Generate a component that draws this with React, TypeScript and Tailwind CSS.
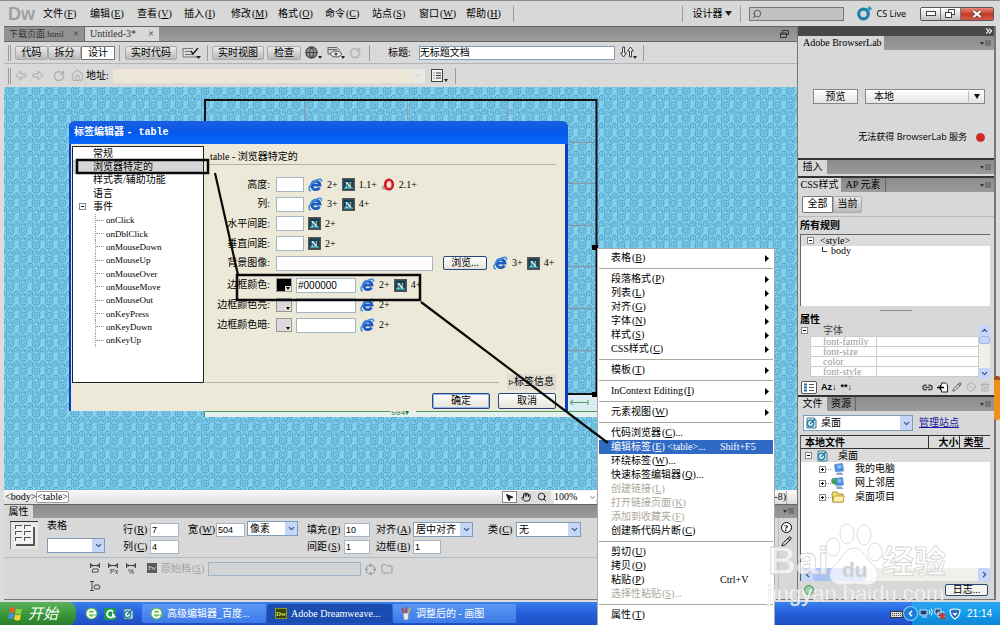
import {
  Ban,
  ChevronDown,
  ChevronLeft,
  ChevronRight,
  ChevronUp,
  ChevronsRight,
  Crosshair,
  Folder,
  Globe,
  Hand,
  House,
  Link2,
  MousePointer2,
  Pencil,
  RotateCw,
  Search,
  Trash2,
} from "lucide-react";

type KeyedProps = { text: string; k?: string; after?: string };

const Keyed = ({ text, k, after }: KeyedProps) => (
  <span className="whitespace-pre">
    {text}
    {k && (
      <span className="ml-px">
        (<u>{k}</u>){after}
      </span>
    )}
  </span>
);

const Divider = () => <div className="h-4 w-px bg-[#9a9a9a]" />;

const Grip = () => (
  <div className="h-4 w-[3px] border-x border-[#9c9c9c]" aria-hidden="true" />
);

const MENUS = [
  ["文件", "F"],
  ["编辑", "E"],
  ["查看", "V"],
  ["插入", "I"],
  ["修改", "M"],
  ["格式", "O"],
  ["命令", "C"],
  ["站点", "S"],
  ["窗口", "W"],
  ["帮助", "H"],
];

const MenuBar = () => (
  <header className="flex h-[26px] shrink-0 items-center border-t border-[#8a8a8a] bg-[#d8d8d8] pr-[6px] pl-2">
    <div className="w-[35px] font-['Liberation_Sans',sans-serif] text-[18px] font-bold text-[#a0a0a0]">
      Dw
    </div>
    <nav className="flex">
      {MENUS.map(([text, k]) => (
        <button key={k} className="w-[47px] text-left">
          <Keyed text={text} k={k} />
        </button>
      ))}
    </nav>
    <Divider />
    <div className="flex-1" />
    <Divider />
    <button className="flex w-[57px] items-center justify-between pr-2 pl-[10px]">
      设计器
      <svg width="7" height="5" className="shrink-0" aria-hidden="true">
        <path d="M0 0h7L3.500 5z" fill="#222" />
      </svg>
    </button>
    <Divider />
    <label className="ml-2 flex h-[14px] w-[95px] items-center border border-[#777] bg-[#c2c2c2] pl-[2px]">
      <Search size={10} className="-scale-x-100 text-[#444]" />
      <input aria-label="搜索" className="min-w-0 flex-1 bg-transparent outline-none" />
    </label>
    <button className="ml-3 flex items-center gap-1 font-['Open_Sans',sans-serif] text-[9px]">
      <svg width="17" height="15" viewBox="0 0 17 15" aria-hidden="true">
        <circle cx="7.500" cy="8" r="4.800" fill="none" stroke="#1f7fa8" strokeWidth="3.200" />
        <path d="M13.500 0v5M11 2.500h5" stroke="#2b94bd" strokeWidth="1.500" />
      </svg>
      CS Live
    </button>
    <div className="ml-[14px] flex h-[14px] overflow-hidden rounded-xs border border-[#555]">
      <button aria-label="最小化" className="flex w-5 items-center justify-center border-r border-[#777] bg-linear-to-b from-white to-[#c0c0c0]">
        <svg width="10" height="5" aria-hidden="true">
          <rect x=".5" y=".5" width="9" height="4" fill="#fff" stroke="#444" />
        </svg>
      </button>
      <button aria-label="还原" className="flex w-5 items-center justify-center border-r border-[#777] bg-linear-to-b from-white to-[#c0c0c0]">
        <svg width="11" height="9" aria-hidden="true">
          <rect x="3.500" y=".5" width="6" height="5" fill="#fff" stroke="#444" />
          <rect x=".5" y="3.500" width="6" height="5" fill="#fff" stroke="#444" />
        </svg>
      </button>
      <button aria-label="关闭" className="flex w-8 items-center justify-center bg-linear-to-b from-[#e8877a] via-[#c63a28] to-[#d2594a]">
        <svg width="10" height="8" viewBox="0 0 10 8" aria-hidden="true">
          <path d="M1.500 1l7 6M8.500 1l-7 6" stroke="#444" strokeWidth="3.600" />
          <path d="M1.500 1l7 6M8.500 1l-7 6" stroke="#fff" strokeWidth="2.200" />
        </svg>
      </button>
    </div>
  </header>
);

const GREY_BTN =
  "flex h-[14px] items-center justify-center rounded-xs border border-[#aaa] bg-linear-to-b from-[#ececec] to-[#b8b8b8]";

const DocumentTabs = () => (
  <div className="flex h-4 shrink-0 items-center border-y border-[#666] bg-linear-to-b from-[#8a8a8a] to-[#9c9c9c]">
    <button className="flex h-[14px] w-[81px] items-center justify-between border-r border-[#666] bg-[#929292] px-[5px] text-[#333]">
      <span className="text-[9px] whitespace-nowrap">下载页面.html</span>
      <span>×</span>
    </button>
    <button className="flex h-[14px] w-[74px] items-center justify-between bg-[#d8d8d8] px-[5px] text-[#333]">
      <span>Untitled-3*</span>
      <span>×</span>
    </button>
    <div className="flex-1" />
    <svg width="9" height="8" className="mr-2" aria-hidden="true">
      <path d="M2.500 2.500v-2h6v4h-2M.5 3h6v4.500h-6zM.5 4h6" fill="none" stroke="#333" />
    </svg>
  </div>
);

const DocumentToolbar = () => (
  <div className="flex h-[22px] shrink-0 items-center border-b border-[#b4b4b4] bg-[#d9d9d9] pl-1">
    <Grip />
    <div className="ml-1 flex">
      <button className={`${GREY_BTN} w-[33px]`}>代码</button>
      <button className={`${GREY_BTN} w-[33px]`}>拆分</button>
      <button className="flex h-[14px] w-[34px] items-center justify-center border border-[#777] bg-white">
        设计
      </button>
    </div>
    <div className="ml-1 flex items-center gap-[5px]">
      <Divider />
      <button className={`${GREY_BTN} w-[52px]`}>实时代码</button>
      <svg width="20" height="14" aria-hidden="true">
        <path d="M1 2.500h10M1 2v9h14M3 5.500h6M3 8.500h8" fill="none" stroke="#777" />
        <path d="M9 5l2 3 5-6" fill="none" stroke="#222" strokeWidth="1.500" />
        <path d="M14 10h5l-2.500 3z" fill="#222" />
      </svg>
      <Divider />
    </div>
    <div className="ml-1 flex items-center gap-[3px]">
      <button className={`${GREY_BTN} w-[52px]`}>实时视图</button>
      <button className={`${GREY_BTN} w-[34px]`}>检查</button>
    </div>
    <button aria-label="预览" className="ml-1 flex w-[22px] items-center">
      <Globe size={13} className="rounded-full bg-[#999] text-[#444]" />
      <svg width="4" height="12" aria-hidden="true">
        <path d="M0 9h4l-2 3z" fill="#222" />
      </svg>
    </button>
    <svg width="18" height="14" aria-hidden="true">
      <path d="M1 1.500h9l3 3M1 1v7h3M1 3.500h9" fill="none" stroke="#666" />
      <ellipse cx="9" cy="8" rx="5.500" ry="3" fill="#e6e6e6" stroke="#555" />
      <circle cx="9" cy="8" r="1.500" fill="#555" />
      <path d="M14 10h4l-2 3z" fill="#222" />
    </svg>
    <RotateCw size={12} strokeWidth={3} className="mr-2 ml-1 text-[#b4b4b4]" />
    <Divider />
    <label htmlFor="doc-title" className="mr-2 ml-[18px] whitespace-nowrap">
      标题:
    </label>
    <input
      id="doc-title"
      defaultValue="无标题文档"
      className="h-[14px] w-[196px] border border-[#7f9db9] bg-white outline-none"
    />
    <svg width="18" height="13" className="mx-[5px]" aria-hidden="true">
      <path d="M2.500 1h2v6h2l-3 4-3-4h2zM9.500 11h2V5h2l-3-4-3 4h2z" fill="#eee" stroke="#444" />
      <path d="M13 10h4l-2 3z" fill="#222" />
    </svg>
    <Divider />
  </div>
);

const AddressBar = () => (
  <div className="flex h-[23px] shrink-0 items-center bg-[#d9d9d9] pl-1">
    <Grip />
    <div className="ml-1 flex items-center gap-1 text-[#b0b0b0]">
      <svg width="12" height="11" aria-hidden="true">
        <path d="M1 5.500l5-4.500v3h5v3H6v3z" fill="none" stroke="#aaa" />
      </svg>
      <svg width="14" height="11" aria-hidden="true">
        <path d="M12 5.500L7 1v3H2v3h5v3z" fill="none" stroke="#aaa" />
      </svg>
      <RotateCw size={12} strokeWidth={3} className="ml-1" />
      <House size={13} className="ml-[2px]" />
    </div>
    <label htmlFor="address" className="mr-1 ml-[2px] whitespace-nowrap">
      地址:
    </label>
    <div className="flex h-[14px] w-[312px] bg-[#ece6d6]">
      <input id="address" className="min-w-0 flex-1 outline-none" />
      <span className="flex w-3 items-center justify-center bg-[#e9e9e4] text-[#bbb]">
        <ChevronDown size={9} />
      </span>
    </div>
    <svg width="20" height="14" className="mr-1 ml-[6px]" aria-hidden="true">
      <rect x=".5" y=".5" width="11" height="12" fill="#f4f4f4" stroke="#444" />
      <path d="M2.500 4h1M5 4h5M2.500 6.500h1M5 6.500h5M2.500 9h1M5 9h5" stroke="#333" />
      <path d="M13 10h4l-2 3z" fill="#222" />
    </svg>
    <Divider />
  </div>
);

const Canvas = () => (
  <svg className="block h-full w-full" aria-hidden="true">
    <defs>
      <pattern id="swirl" width="13" height="14" patternUnits="userSpaceOnUse">
        <rect width="13" height="14" fill="#85d0ec" />
        <g fill="none" stroke="#4fa3ca" strokeWidth="1">
          <path d="M6 4a1 1 0 0 1 2 0a2 2 0 0 1-4 0a3 3 0 0 1 6 0a4 4 0 0 1-8 0a5 5 0 0 1 9-3" />
          <path d="M-1 11a1 1 0 0 1 2 0a2 2 0 0 1-4 0a3 3 0 0 1 6 0a4 4 0 0 1-8 0" />
          <path d="M12 11a1 1 0 0 1 2 0a2 2 0 0 1-4 0a3 3 0 0 1 6 0a4 4 0 0 1-8 0" />
          <path d="M4 13.500q2.500-4 5 0M4.500 11q2-3 4 0" />
        </g>
      </pattern>
    </defs>
    <rect width="100%" height="100%" fill="url(#swirl)" />
    <rect x="200" y="324" width="393" height="6" fill="#e4f1ee" />
    <rect x="560" y="308" width="33" height="18" fill="#d8ecf2" />
    <path d="M300.500 13v25M403.500 13v25M503.500 13v25" stroke="#8aa0aa" />
    <path d="M560 55.500h32M560 96.500h32M560 138.500h32M560 179.500h32M560 221.500h32M560 263.500h32" stroke="#8a98a2" />
    <path d="M201 320V13h391.500v294H560" fill="none" stroke="#111" strokeWidth="2" />
    <path d="M200.500 330v-5.500h186M412 324.500h181M567 315.500h17M569 313l-3 2.500 3 2.500M584 313v5" fill="none" stroke="#4f9a5c" />
    <text x="387" y="328" fontSize="8" fill="#2e7a3c" fontFamily="Liberation Mono">504▾</text>
    <path d="M588 158h6v5h-6zM588 305h6v5h-6z" fill="#000" />
  </svg>
);

const IeIcon = () => (
  <svg width="15" height="14" viewBox="0 0 15 14" aria-hidden="true">
    <path d="M11.500 9.500A4.200 4.200 0 1 1 12 7.200H4.500" fill="none" stroke="#1c5cc0" strokeWidth="2.800" />
    <path d="M4.200 5.500A4.200 4.200 0 0 1 8.500 3" fill="none" stroke="#6fb0f4" />
    <path d="M3 12.800C-1 13 1.500 6 7 3c4-2.400 7-2.500 6.500.8" fill="none" stroke="#3d8ae0" strokeWidth="1.500" />
  </svg>
);

const NetscapeIcon = () => (
  <svg width="13" height="13" aria-hidden="true">
    <rect x=".75" y=".75" width="11.500" height="11.500" fill="#123f52" stroke="#555" strokeWidth="1.500" />
    <path d="M2 9.500q4.500-3 9 0V11H2z" fill="#3d98a6" />
    <text x="3" y="10" fontSize="9" fontWeight="bold" fontFamily="Liberation Serif" fill="#dff3fa">N</text>
  </svg>
);

const OperaIcon = () => (
  <svg width="14" height="13" aria-hidden="true">
    <ellipse cx="4" cy="9.500" rx="3.500" ry="2.500" fill="#b9a7a2" />
    <ellipse cx="8" cy="6.500" rx="3.800" ry="4.800" fill="#f3dcd5" stroke="#cf1c22" strokeWidth="2.600" />
  </svg>
);

const Support = ({ kind, version }: { kind: string; version: string }) => (
  <span className="flex items-center gap-1">
    {kind === "ie" && <IeIcon />}
    {kind === "ns" && <NetscapeIcon />}
    {kind === "op" && <OperaIcon />}
    {version}
  </span>
);

const EVENTS = [
  "onClick",
  "onDblClick",
  "onMouseDown",
  "onMouseUp",
  "onMouseOver",
  "onMouseMove",
  "onMouseOut",
  "onKeyPress",
  "onKeyDown",
  "onKeyUp",
];

const SIZE_ROWS = [
  { id: "height", label: "高度", support: [["ie", "2+"], ["ns", "1.1+"], ["op", "2.1+"]] },
  { id: "cols", label: "列", support: [["ie", "3+"], ["ns", "4+"]] },
  { id: "hspace", label: "水平间距", support: [["ns", "2+"]] },
  { id: "vspace", label: "垂直间距", support: [["ns", "2+"]] },
];

const COLOR_ROWS = [
  { id: "bordercolor", label: "边框颜色", swatch: "bg-black", value: "#000000", support: [["ie", "2+"], ["ns", "4+"]] },
  { id: "borderlight", label: "边框颜色亮", swatch: "bg-[#dcd9de]", value: "", support: [["ie", "2+"]] },
  { id: "borderdark", label: "边框颜色暗", swatch: "bg-[#dcd9de]", value: "", support: [["ie", "2+"]] },
];

const FieldLabel = ({ id, text }: { id: string; text: string }) => (
  <label htmlFor={id} className="w-[61px] shrink-0 text-right whitespace-nowrap">
    {text}:
  </label>
);

const XP_INPUT = "h-[15px] border border-[#a5b5c5] bg-white px-px outline-none";
const XP_BTN =
  "flex items-center justify-center rounded-xs border border-[#27487c] bg-linear-to-b from-white to-[#e6e3d8]";

const Expander = ({ open }: { open?: boolean }) => (
  <svg width="7" height="7" className="shrink-0" aria-hidden="true">
    <rect x=".5" y=".5" width="6" height="6" fill="#fff" stroke="#888" />
    <path d={open ? "M2 3.500h3" : "M2 3.500h3M3.500 2v3"} stroke="#000" />
  </svg>
);

const TagEditor = () => (
  <section className="absolute top-[34px] left-[65px] flex h-[290px] w-[499px] flex-col rounded-t-md border-r-[3px] border-l-2 border-[#0a3cc4] bg-[#ece9d8]">
    <h1 className="-mr-[3px] -ml-0.5 flex h-[23px] shrink-0 items-center rounded-t-md bg-linear-to-b from-[#1a5fe0] via-[#0458ea] to-[#0a66fb] px-[5px] font-bold text-white">
      <span>
        标签编辑器{" "}
        <span className="font-['Liberation_Mono',monospace]">- table</span>
      </span>
    </h1>
    <div className="flex flex-1">
      <div className="m-px mt-[2px] flex h-[237px] w-[132px] shrink-0 flex-col border border-[#222] bg-white">
        <ul className="flex h-[200px] flex-col leading-3">
          <li className="flex flex-1 items-center pl-5">常规</li>
          <li className="flex flex-1 items-center bg-[#d6d6d6] pl-5">浏览器特定的</li>
          <li className="flex flex-1 items-center pl-5">样式表/辅助功能</li>
          <li className="flex flex-1 items-center pl-5">语言</li>
          <li className="flex flex-1 items-center pl-[6px]">
            <Expander open />
            <span className="ml-[7px]">事件</span>
          </li>
          {EVENTS.map((name) => (
            <li key={name} className="ml-[22px] flex flex-1 items-center border-l border-dotted border-[#999] text-[9px]">
              <span className="mr-[2px] w-2 border-t border-dotted border-[#999]" />
              {name}
            </li>
          ))}
        </ul>
      </div>
      <div className="flex min-w-0 flex-1 flex-col pr-[9px] pl-1">
        <h2 className="mt-[5px] flex h-4 items-center border-b border-[#b5b2a4] pl-px">
          table - 浏览器特定的
        </h2>
        <div className="mt-[10px] flex h-[98px] flex-col">
          {SIZE_ROWS.map((row) => (
            <div key={row.id} className="flex flex-1 items-center">
              <FieldLabel id={row.id} text={row.label} />
              <input id={row.id} className={`${XP_INPUT} mr-1 ml-[6px] w-7`} />
              <span className="flex gap-1">
                {row.support.map(([kind, version]) => (
                  <Support key={kind} kind={kind} version={version} />
                ))}
              </span>
            </div>
          ))}
          <div className="flex flex-1 items-center">
            <FieldLabel id="background" text="背景图像" />
            <input id="background" className={`${XP_INPUT} ml-[6px] w-[157px]`} />
            <button className={`${XP_BTN} mr-[6px] ml-[10px] h-[14px] w-11`}>浏览...</button>
            <span className="flex gap-1">
              <Support kind="ie" version="3+" />
              <Support kind="ns" version="4+" />
            </span>
          </div>
        </div>
        <div className="mt-[2px] flex h-[60px] flex-col">
          {COLOR_ROWS.map((row) => (
            <div key={row.id} className="flex flex-1 items-center">
              <FieldLabel id={row.id} text={row.label} />
              <button
                aria-label={row.label}
                className={`${row.swatch} mr-1 ml-[6px] flex h-[14px] w-4 items-end justify-end border border-[#999]`}
              >
                <svg width="6" height="5" className="bg-[#e6e3dc]" aria-hidden="true">
                  <path d="M1 1h4L3 4z" fill="#000" />
                </svg>
              </button>
              <input
                id={row.id}
                defaultValue={row.value}
                className={`${XP_INPUT} mr-1 w-[60px] font-['Liberation_Sans',sans-serif]`}
              />
              <span className="flex gap-1">
                {row.support.map(([kind, version]) => (
                  <Support key={kind} kind={kind} version={version} />
                ))}
              </span>
            </div>
          ))}
        </div>
        <div className="mt-[38px] flex h-[18px] items-center">
          <div className="-ml-1 h-px flex-1 bg-[#b5b2a4]" />
          <button className="ml-2 h-4 bg-[#dedbd2] px-[2px] whitespace-nowrap">▹标签信息</button>
        </div>
        <div className="mt-[2px] flex justify-end gap-2">
          <button className={`${XP_BTN} h-4 w-[58px] ring-1 ring-[#8fb4ee] ring-inset`}>确定</button>
          <button className={`${XP_BTN} h-4 w-[58px]`}>取消</button>
        </div>
      </div>
    </div>
  </section>
);

const StatusBar = () => (
  <div className="flex h-[14px] shrink-0 items-center bg-linear-to-b from-[#fafafa] to-[#dedede] pl-px">
    &lt;body&gt;
    <span className="flex h-3 items-center rounded-xs border border-[#999] bg-white">
      &lt;table&gt;
    </span>
    <div className="flex-1" />
    <button aria-label="选取" className="flex h-3 w-[15px] items-center justify-center border border-[#888] bg-white">
      <MousePointer2 size={9} fill="#222" />
    </button>
    <div className="flex h-3 items-center gap-[6px] bg-[#dcdcdc] px-1">
      <Hand size={10} />
      <Search size={10} />
    </div>
    <div className="mx-[3px] flex h-[13px] w-[42px] items-center bg-white">
      <span className="flex-1">100%</span>
      <ChevronDown size={7} />
    </div>
    <div className="flex h-[13px] w-[188px] items-center justify-end border-r border-[#aaa]">
      -8)
    </div>
    <div className="w-[10px]" />
  </div>
);

type SelectProps = { label: string; value: string; className: string };

const XpSelect = ({ label, value, className }: SelectProps) => (
  <span className={`${className} flex h-[15px] border border-[#7f9db9] bg-white`}>
    <select aria-label={label} className="min-w-0 flex-1 appearance-none pl-[2px] outline-none">
      <option>{value}</option>
    </select>
    <span className="pointer-events-none flex w-3 items-center justify-center bg-[#c6d6f8] text-[#2f4f8c]">
      <ChevronDown size={9} strokeWidth={3} />
    </span>
  </span>
);

type NumProps = { id: string; text: string; k: string; value: string; label: string; input: string };

const NumField = ({ id, text, k, value, label, input }: NumProps) => (
  <div className="flex h-[17px] items-center">
    <label htmlFor={id} className={label}>
      <Keyed text={text} k={k} />
    </label>
    <input
      id={id}
      defaultValue={value}
      className={`${input} h-[14px] border border-[#a5b5c5] bg-white px-px font-['Liberation_Sans',sans-serif] text-[9px] outline-none`}
    />
  </div>
);

const PanelMenuIcon = () => (
  <svg width="11" height="7" className="mr-[3px] ml-auto" aria-hidden="true">
    <path d="M0 2h4l-2 3z" fill="#333" />
    <path d="M5 1h6M5 3h6M5 5h6" stroke="#555" />
  </svg>
);

const PANEL_BAR =
  "flex h-[14px] shrink-0 items-center bg-linear-to-b from-[#8c8c8c] to-[#9a9a9a]";

const Properties = () => (
  <section className="flex h-24 shrink-0 flex-col border-b border-[#777] bg-[#d8d8d8]">
    <div className={`${PANEL_BAR} border-t border-[#666]`}>
      <h2 className="flex h-full w-[29px] items-center justify-center bg-[#d8d8d8]">属性</h2>
      <PanelMenuIcon />
    </div>
    <div className="flex flex-1">
      <div className="flex min-w-0 flex-1 flex-col">
        <div className="flex h-10 border-b border-[#b2bcc6] pt-[3px] pl-[6px]">
          <svg width="28" height="28" aria-hidden="true">
            <path d="M0 28V.5h28" fill="none" stroke="#333" />
            <rect x="1" y="1" width="27" height="27" fill="#e6e6e6" />
            <rect x="6" y="6" width="19" height="19" fill="#555" />
            <rect x="4" y="4" width="19" height="19" fill="#f4f4f4" />
            <path d="M5 4.500h7M14 4.500h7M5 10.500h7M14 10.500h7M5 16.500h7M14 16.500h7M5.500 5v3M14.500 5v3M5.500 11v3M14.500 11v3M5.500 17v3M14.500 17v3" stroke="#555" />
          </svg>
          <div className="mr-[18px] ml-[9px] flex flex-col gap-1">
            <span className="h-[13px] leading-[10px]">表格</span>
            <XpSelect label="表格" value="" className="w-[58px]" />
          </div>
          <div className="mr-[9px]">
            <NumField id="rows" text="行" k="R" value="7" label="w-[27px]" input="w-[29px]" />
            <NumField id="columns" text="列" k="C" value="4" label="w-[27px]" input="w-[29px]" />
          </div>
          <NumField id="width" text="宽" k="W" value="504" label="w-7" input="w-[29px]" />
          <XpSelect label="单位" value="像素" className="mr-[9px] ml-[2px] w-[51px]" />
          <div className="mr-[6px]">
            <NumField id="padding" text="填充" k="P" value="10" label="w-[37px]" input="w-[26px]" />
            <NumField id="spacing" text="间距" k="S" value="1" label="w-[37px]" input="w-[26px]" />
          </div>
          <div>
            <div className="flex h-[17px] items-center">
              <span className="w-[37px]">
                <Keyed text="对齐" k="A" />
              </span>
              <XpSelect label="对齐" value="居中对齐" className="w-[60px]" />
            </div>
            <NumField id="border" text="边框" k="B" value="1" label="w-[37px]" input="w-[28px]" />
          </div>
          <div className="ml-[15px] flex h-[17px] items-center">
            <span className="w-7">
              <Keyed text="类" k="C" />
            </span>
            <XpSelect label="类" value="无" className="w-[65px]" />
          </div>
        </div>
        <div className="mt-1 flex items-start pl-[85px]">
          <div className="flex w-[58px] flex-wrap gap-[6px]">
            {["", "Px", "%", "I"].map((unit) => (
              <svg key={unit} width="12" height="12" aria-hidden="true">
                {unit === "I" ? (
                  <path d="M1 1.500h4M3 1.500v9M1 10.500h4M6 5h4l1 2-1 2H6L5 7z" fill="none" stroke="#444" />
                ) : (
                  <path d="M1.500 1v5M10.500 1v5M1 3.500h10M3 2v3M9 2v3" stroke="#444" />
                )}
                {unit === "" && <path d="M4 7h5v3H3z" fill="#eee" stroke="#444" />}
                {(unit === "Px" || unit === "%") && (
                  <text x="3" y="12" fontSize="7" fill="#333" fontFamily="Liberation Sans">{unit}</text>
                )}
              </svg>
            ))}
          </div>
          <span className="mt-px flex h-[10px] w-[10px] items-center justify-center bg-[#5a5a5a] text-[6px] text-[#ddd]">
            Fw
          </span>
          <label htmlFor="source" className="ml-1 w-[47px] text-[#a2a2a2]">
            <Keyed text="原始档" k="S" />
          </label>
          <input id="source" disabled className="h-[14px] w-[153px] border border-[#9fb2c6] bg-[#d2d4d6]" />
          <Crosshair size={11} className="mt-[2px] ml-1 text-[#888]" />
          <Folder size={12} className="mt-px ml-[5px] text-[#999]" />
        </div>
      </div>
      <div className="flex w-[19px] flex-col items-center gap-[3px] border-l border-[#bbb] pt-1 pr-1">
        <span className="flex h-[11px] w-[11px] items-center justify-center rounded-full border border-black bg-white text-[9px] font-bold">
          ?
        </span>
        <Pencil size={11} />
      </div>
    </div>
  </section>
);

const BrowserLabPanel = () => (
  <section className="flex h-[122px] shrink-0 flex-col">
    <div className={PANEL_BAR}>
      <h2 className="flex h-full w-[86px] items-center bg-[#d8d8d8] pl-[5px] whitespace-nowrap">
        Adobe BrowserLab
      </h2>
      <PanelMenuIcon />
    </div>
    <div className="mt-[39px] flex gap-[7px] pr-[9px] pl-[15px]">
      <button className="h-[15px] w-[45px] border border-[#888] bg-linear-to-b from-white to-[#e4e4e4] leading-3">
        预览
      </button>
      <span className="flex h-[15px] flex-1 items-center border border-[#888] bg-linear-to-b from-white to-[#e4e4e4]">
        <select aria-label="环境" className="min-w-0 flex-1 appearance-none pl-2 leading-3 outline-none">
          <option>本地</option>
        </select>
        <span className="pointer-events-none flex h-[11px] w-4 items-center justify-center border-l border-[#bbb]">
          <svg width="6" height="5" aria-hidden="true">
            <path d="M0 0h6L3 5z" fill="#111" />
          </svg>
        </span>
      </span>
    </div>
    <div className="mt-[26px] flex items-center justify-end gap-[9px] pr-[9px]">
      <span className="text-[9px]">
        无法获得 <span className="font-['Open_Sans',sans-serif]">BrowserLab</span> 服务
      </span>
      <span className="h-[9px] w-[9px] rounded-full border border-[#b33] bg-[#dd2424]" />
    </div>
  </section>
);

const CssPanel = () => (
  <section className="flex h-[237px] shrink-0 flex-col">
    <div className="border-t-2 border-[#333]">
      <div className={PANEL_BAR}>
        <h2 className="flex h-full w-[29px] items-center justify-center bg-[#d8d8d8]">插入</h2>
        <PanelMenuIcon />
      </div>
    </div>
    <div className="mt-[2px] border-t-2 border-[#333]">
      <div className={PANEL_BAR}>
        <button className="flex h-full w-[43px] items-center justify-center bg-[#d8d8d8] whitespace-nowrap">
          CSS样式
        </button>
        <button className="flex h-full w-[45px] items-center justify-center border-r border-[#666] whitespace-nowrap">
          AP 元素
        </button>
        <PanelMenuIcon />
      </div>
    </div>
    <div className="flex h-[25px] shrink-0 items-center border-b border-[#bbb] pl-1">
      <button className="h-[17px] w-[31px] rounded-l-xs border border-[#777] bg-white">全部</button>
      <button className="h-[17px] w-[29px] rounded-r-xs border border-[#aaa] bg-linear-to-b from-[#e8e8e8] to-[#bbb]">当前</button>
    </div>
    <h3 className="flex h-[17px] shrink-0 items-center pl-[2px] font-bold">所有规则</h3>
    <div className="mr-1 ml-[2px] h-[72px] shrink-0 border-t border-l border-[#666] bg-white">
      <div className="flex h-[11px] items-center gap-[6px] bg-[#dcdcdc] pl-[6px]">
        <Expander open />
        &lt;style&gt;
      </div>
      <div className="flex h-[10px] items-center gap-1 pl-[21px]">
        <svg width="5" height="8" aria-hidden="true">
          <path d="M.5 0v4.500H5" fill="none" stroke="#333" />
        </svg>
        body
      </div>
    </div>
    <div className="mx-auto mt-1 w-8 border-t border-[#888]" />
    <h3 className="mt-[3px] flex h-[11px] shrink-0 items-center pl-[2px] font-bold">属性</h3>
    <div className="mr-1 flex min-h-0 flex-1">
      <div className="flex min-w-0 flex-1 flex-col">
        <div className="flex h-[11px] items-center gap-[15px] pl-[3px] text-[#444]">
          <Expander open />
          字体
        </div>
        <table className="ml-3 table-fixed border-collapse bg-white text-[#9a9a9a]">
          <tbody>
            {["font-family", "font-size", "color", "font-style"].map((name) => (
              <tr key={name} className="h-[10px] border border-[#ccc] leading-[9px]">
                <td className="w-[66px] border-r border-[#ccc] py-0 pl-3">{name}</td>
                <td />
              </tr>
            ))}
          </tbody>
        </table>
      </div>
      <div className="flex w-[11px] flex-col justify-between bg-[#f0f0ec] text-[#2f4f8c]">
        <span className="flex h-[11px] items-center justify-center bg-[#c6d6f8]">
          <ChevronUp size={9} strokeWidth={3} />
        </span>
        <span className="mb-auto h-2 rounded-xs border border-[#9ab8e8] bg-[#c6d6f8]" />
        <span className="flex h-[11px] items-center justify-center bg-[#c6d6f8]">
          <ChevronDown size={9} strokeWidth={3} />
        </span>
      </div>
    </div>
    <div className="flex h-4 shrink-0 items-center gap-1 pr-1 pl-[3px]">
      <button aria-label="分类视图" className="flex h-[13px] w-4 items-center justify-center rounded-xs border border-[#555] bg-white">
        <svg width="12" height="9" aria-hidden="true">
          <path d="M1 1.500h3M1 4.500h3M1 7.500h3" stroke="#2b5fa8" strokeWidth="2" />
          <path d="M6 1.500h5M6 4.500h5M6 7.500h5" stroke="#555" />
        </svg>
      </button>
      <button className="font-['Liberation_Sans',sans-serif] text-[9px] font-bold">Az↓</button>
      <button className="font-['Liberation_Sans',sans-serif] text-[9px] font-bold">**↓</button>
      <div className="ml-auto flex items-center gap-1">
        <Link2 size={11} strokeWidth={3} className="text-[#444]" />
        <svg width="11" height="11" aria-hidden="true">
          <path d="M4.500 3V1h4l2 2v7h-6V8" fill="#fff" stroke="#222" />
          <path d="M0 5.500h7M3.500 3v5" stroke="#000" strokeWidth="1.500" />
        </svg>
        <Pencil size={10} className="text-[#444]" />
        <Ban size={10} className="text-[#aaa]" />
        <Trash2 size={10} className="text-[#aaa]" />
      </div>
    </div>
  </section>
);

const SiteIcon = () => (
  <svg width="12" height="12" aria-hidden="true">
    <path d="M2 1h7l2 2v8H2z" fill="#cfe9f2" stroke="#48788c" />
    <circle cx="5.500" cy="6.500" r="3.200" fill="#e6f6fb" stroke="#2d86a6" strokeWidth="1.500" />
    <path d="M5 7l5-5" stroke="#24708e" strokeWidth="1.200" />
  </svg>
);

const PcIcon = ({ globe }: { globe?: boolean }) => (
  <svg width="14" height="13" viewBox="0 0 14 13" aria-hidden="true">
    <path d="M3.500 1.500l8-1 1 7.500-8 .5z" fill="#3f8cf0" stroke="#7c9cc8" />
    <path d="M6 2.500l4-.5.500 3-4 1z" fill="#8cc4fa" />
    <path d="M5.500 9.500h5l2 2.500h-7z" fill="#8fa5bd" />
    {globe && <circle cx="3.500" cy="4" r="3.200" fill="#3f9f4e" />}
    {globe && <path d="M1.500 3q2-2 3 0t1.500 2" fill="none" stroke="#5aa6ee" />}
  </svg>
);

const FolderIcon = () => (
  <svg width="14" height="12" aria-hidden="true">
    <path d="M1 3l1-2h4l1 2h5v8H2z" fill="#f6e27c" stroke="#a58a2c" />
    <path d="M3 5h10l-1 6H2z" fill="#fdf2a4" stroke="#a58a2c" strokeWidth=".7" />
  </svg>
);

const FILES = [
  { name: "我的电脑", icon: <PcIcon /> },
  { name: "网上邻居", icon: <PcIcon globe /> },
  { name: "桌面项目", icon: <FolderIcon /> },
];

const FilesPanel = () => (
  <section className="flex min-h-0 flex-1 flex-col border-t-2 border-[#333]">
    <div className={PANEL_BAR}>
      <button className="flex h-full w-[29px] items-center justify-center bg-[#d8d8d8]">文件</button>
      <button className="flex h-full w-[29px] items-center justify-center border-r border-[#666]">资源</button>
      <PanelMenuIcon />
    </div>
    <div className="flex items-center py-1 pl-[5px]">
      <span className="flex h-4 w-[110px] items-center border border-[#7f9db9] bg-white pl-px">
        <SiteIcon />
        <select aria-label="站点" className="min-w-0 flex-1 appearance-none pl-1 outline-none">
          <option>桌面</option>
        </select>
        <span className="pointer-events-none flex h-full w-3 items-center justify-center bg-[#c6d6f8] text-[#2f4f8c]">
          <ChevronDown size={9} strokeWidth={3} />
        </span>
      </span>
      <a href="#sites" className="ml-[6px] text-[#1a1aa0] underline">
        管理站点
      </a>
    </div>
    <div className="mr-1 ml-[2px] flex min-h-0 flex-1 flex-col border-l border-[#555] bg-white">
      <table className="w-full table-fixed border-collapse">
        <thead>
          <tr className="h-[13px] border-y border-[#333] bg-[#dcdcdc] text-left leading-[11px]">
            <th className="py-0 pl-1">本地文件</th>
            <th className="w-[31px] border-x border-[#333] py-0 text-right">大小</th>
            <th className="w-[31px] py-0 pl-1">类型</th>
          </tr>
        </thead>
        <tbody>
          <tr className="h-[13px] bg-[#dcdcdc] leading-[13px]">
            <td colSpan={3} className="p-0">
              <div className="flex items-center pl-1">
                <Expander open />
                <span className="mr-[10px] ml-1">
                  <SiteIcon />
                </span>
                桌面
              </div>
            </td>
          </tr>
          {FILES.map((file) => (
            <tr key={file.name} className="h-[14px]">
              <td colSpan={3} className="p-0">
                <div className="flex items-center pl-[18px]">
                  <Expander />
                  <span className="w-[5px] border-t border-dotted border-[#999]" />
                  <span className="mr-[10px]">{file.icon}</span>
                  {file.name}
                </div>
              </td>
            </tr>
          ))}
        </tbody>
      </table>
      <div className="mt-auto flex h-[13px] justify-between bg-[#f1f0ea] text-[#2f4f8c]">
        <span className="flex w-3 items-center justify-center bg-[#c6d6f8]">
          <ChevronLeft size={9} strokeWidth={3} />
        </span>
        <span className="mr-auto w-[53px] rounded-xs bg-[#a9c3f4]" />
        <span className="flex w-3 items-center justify-center bg-[#c6d6f8]">
          <ChevronRight size={9} strokeWidth={3} />
        </span>
      </div>
    </div>
    <div className="flex h-[18px] shrink-0 items-center justify-between px-[6px]">
      <span className="h-[10px] w-[10px] rounded-full border border-[#3b8a4b] bg-[#9fd0a8]" />
      <button className="h-3 w-[43px] rounded-xs border border-[#27487c] bg-[#f4f3ee] leading-[10px]">
        日志...
      </button>
    </div>
  </section>
);

type Item = { text: string; k: string; after?: string; sub?: boolean; off?: boolean; on?: boolean; keys?: string };

const CONTEXT_GROUPS: Item[][] = [
  [{ text: "表格", k: "B", sub: true }],
  [
    { text: "段落格式", k: "P", sub: true },
    { text: "列表", k: "L", sub: true },
    { text: "对齐", k: "G", sub: true },
    { text: "字体", k: "N", sub: true },
    { text: "样式", k: "S", sub: true },
    { text: "CSS样式", k: "C", sub: true },
  ],
  [{ text: "模板", k: "T", sub: true }],
  [{ text: "InContext Editing", k: "I", sub: true }],
  [{ text: "元素视图", k: "W", sub: true }],
  [
    { text: "代码浏览器", k: "C", after: "..." },
    { text: "编辑标签", k: "E", after: " <table>...", on: true, keys: "Shift+F5" },
    { text: "环绕标签", k: "W", after: "..." },
    { text: "快速标签编辑器", k: "Q", after: "..." },
    { text: "创建链接", k: "L", off: true },
    { text: "打开链接页面", k: "K", off: true },
    { text: "添加到收藏夹", k: "F", off: true },
    { text: "创建新代码片断", k: "C" },
  ],
  [
    { text: "剪切", k: "U" },
    { text: "拷贝", k: "O" },
    { text: "粘贴", k: "P", keys: "Ctrl+V" },
    { text: "选择性粘贴", k: "S", after: "...", off: true },
  ],
  [{ text: "属性", k: "T" }],
];

const ContextMenu = () => (
  <div className="absolute top-[248px] left-[597px] flex w-[178px] flex-col border border-[#aaa] bg-white p-px pt-[2px] pb-1">
    {CONTEXT_GROUPS.map((group, i) => (
      <div key={i} className={i > 0 ? "mt-[3px] border-t border-[#aca899] pt-[3px]" : ""}>
        {group.map((item) => (
          <button
            key={item.text}
            disabled={item.off}
            className={`flex h-[14px] w-full items-center pr-1 pl-3 ${item.on ? "bg-[#316ac5] text-white" : item.off ? "text-[#aca899]" : "text-black"}`}
          >
            <Keyed text={item.text} k={item.k} after={item.after} />
            <span className="ml-auto flex">
              {item.keys && <span className="w-[49px] text-left">{item.keys}</span>}
              {item.sub && (
                <svg width="4" height="7" aria-hidden="true">
                  <path d="M0 0v7l4-3.500z" fill="#000" />
                </svg>
              )}
            </span>
          </button>
        ))}
      </div>
    ))}
  </div>
);

const Annotations = () => (
  <svg className="pointer-events-none absolute inset-0 h-full w-full" aria-hidden="true">
    <g fill="none" stroke="#0a0a0a">
      <rect x="77" y="160" width="131" height="13" strokeWidth="2.500" />
      <rect x="237" y="275" width="183" height="25" strokeWidth="2.500" />
      <path d="M215 173l23 102M421 302l187 141" strokeWidth="2.200" />
    </g>
  </svg>
);

const Watermark = () => (
  <svg className="pointer-events-none absolute right-[50px] bottom-[15px]" width="185" height="96" aria-hidden="true">
    <g fill="#fff" fillOpacity=".7" stroke="#d4d4d4" strokeWidth=".8">
      <text x="3" y="60" fontSize="39" fontWeight="bold" fontFamily="Liberation Sans">Bai</text>
      <ellipse cx="68" cy="33" rx="7" ry="9" />
      <ellipse cx="82" cy="20" rx="7" ry="10" />
      <ellipse cx="99" cy="21" rx="7" ry="10" />
      <ellipse cx="110" cy="38" rx="7" ry="9" />
      <path d="M89 34c10 0 12 12 20 18 9 9 3 20-9 19-7-1-15-1-22 0-11 1-18-10-9-19 8-6 9-18 20-18z" />
      <text x="117" y="59" fontSize="32" fontWeight="bold" fontFamily="Noto Sans CJK SC">经验</text>
    </g>
    <text x="77" y="63" fontSize="21" fontWeight="bold" fill="#d0d0d0" fontFamily="Liberation Sans">du</text>
    <text x="2" y="87" fontSize="22" fill="#fff" fillOpacity=".85" stroke="#d4d4d4" strokeWidth=".4" fontFamily="Liberation Sans">
      jingyan.baidu.com
    </text>
  </svg>
);

const GreenE = () => (
  <svg width="13" height="13" viewBox="0 0 13 13" aria-hidden="true">
    <circle cx="6.500" cy="6.500" r="6" fill="#5fbf4a" />
    <path d="M10 8.500A4 4 0 1 1 10.500 6.500H3" fill="none" stroke="#fff" strokeWidth="1.800" />
  </svg>
);

const Taskbar = () => (
  <footer className="flex h-[23px] shrink-0 items-center bg-linear-to-b from-[#3a80ee] via-[#245edb] to-[#1f4fc4] text-white">
    <button className="flex h-full w-[76px] items-center gap-[5px] rounded-r-lg bg-linear-to-b from-[#5cb25c] via-[#3a9a3a] to-[#2d7d2d] pl-2 text-[15px] italic">
      <svg width="15" height="15" viewBox="0 0 15 15" aria-hidden="true">
        <path d="M2 2q3-1.500 5 0L6 7Q4 5.500 1 7z" fill="#ee5a2e" />
        <path d="M8 2.500q3 1.500 6 0L13 8Q10 9 7 7.500z" fill="#8bd13c" />
        <path d="M1 8q3-1.500 5 0L5 13Q3 11.500 0 13z" fill="#4a8cf0" />
        <path d="M7 8.500q3 1.500 6 0L12 14Q9 15 6 13.500z" fill="#fbd12e" />
      </svg>
      开始
    </button>
    <div className="flex w-[66px] items-center gap-[6px] pl-[9px]">
      <GreenE />
      <svg width="12" height="12" aria-hidden="true">
        <rect width="12" height="12" rx="2" fill="#1c9a4c" />
        <path d="M9 3.500a3.500 3.500 0 1 0 0 5V6.500l2 3" fill="none" stroke="#fff" strokeWidth="1.800" />
      </svg>
      <SiteIcon />
    </div>
    <button className="flex h-[19px] w-[124px] items-center gap-1 rounded-xs bg-linear-to-b from-[#5a97f5] to-[#3c7ae8] pl-2">
      <GreenE />
      <span>高级编辑器_百度...</span>
    </button>
    <button className="ml-px flex h-[19px] w-[125px] items-center gap-1 rounded-xs bg-[#1b4cb0] pl-2">
      <span className="flex h-[11px] w-3 items-center justify-center border border-[#8a9a20] bg-[#39420c] text-[7px] font-bold text-[#d3e04a]">
        Dw
      </span>
      <span>Adobe Dreamweave...</span>
    </button>
    <button className="ml-px flex h-[19px] w-[123px] items-center gap-1 rounded-xs bg-linear-to-b from-[#5a97f5] to-[#3c7ae8] pl-[7px]">
      <svg width="12" height="13" aria-hidden="true">
        <path d="M3 6h6l-1 7H4z" fill="#e6edf5" stroke="#777" strokeWidth=".6" />
        <path d="M4 6L2 1M6 6V0" stroke="#d33a2a" strokeWidth="1.500" />
        <path d="M8 6l2-5" stroke="#e8b23a" strokeWidth="1.500" />
      </svg>
      <span>调整后的 - 画图</span>
    </button>
    <div className="flex-1" />
    <svg width="13" height="10" className="mr-[9px]" aria-hidden="true">
      <rect x=".5" y="2.500" width="12" height="6" fill="#ddd" stroke="#333" />
      <path d="M2 4.500h9M2 6.500h9" stroke="#444" strokeDasharray="1 1" />
    </svg>
    <div className="flex h-full w-[88px] items-center gap-[2px] bg-linear-to-b from-[#2ba6f2] via-[#129be9] to-[#0f86d6]">
      <span className="-ml-2 flex h-[13px] w-[13px] shrink-0 items-center justify-center rounded-full bg-[#1b7fd8] ring-1 ring-[#8fd0fa]">
        <ChevronLeft size={9} strokeWidth={4} />
      </span>
      <svg width="28" height="13" className="shrink-0" aria-hidden="true">
        <path d="M1 3h7v5H1zM3 10h5" fill="#24406e" stroke="#cfe4fa" />
        <path d="M10 3q2 2 0 4M12 1.500q3 3 0 7" fill="none" stroke="#dff" />
        <path d="M16 2h6v5h-6zM19 5h6v5h-6z" fill="#24406e" stroke="#cfe4fa" />
        <path d="M21 7l5 5M26 7l-5 5" stroke="#e2331f" strokeWidth="1.800" />
      </svg>
      <svg width="12" height="12" className="mr-1 shrink-0" aria-hidden="true">
        <path d="M1 2q5-2 10 0 0 6-5 9Q1 8 1 2z" fill="#2b6fc0" stroke="#fff" strokeWidth="1.200" />
        <path d="M3.500 5l2.500 3 2.500-3z" fill="#fff" />
      </svg>
      <span className="font-['Liberation_Sans',sans-serif]">21:14</span>
    </div>
  </footer>
);

export default function App() {
  return (
    <div className="relative flex h-screen flex-col overflow-hidden bg-[#dcdcdc] font-['Liberation_Serif','Noto_Sans_CJK_SC',sans-serif] text-[10px] leading-[14px] text-black">
      <MenuBar />
      <div className="flex min-h-0 flex-1 pb-[2px] pl-1">
        <main className="flex min-w-0 flex-1 flex-col">
          <DocumentTabs />
          <DocumentToolbar />
          <AddressBar />
          <div className="relative min-h-0 flex-1 overflow-hidden">
            <Canvas />
            <TagEditor />
          </div>
          <StatusBar />
          <Properties />
        </main>
        <aside className="mr-1 flex w-[199px] shrink-0 flex-col border-r-2 border-b border-l border-[#777] bg-[#d8d8d8]">
          <div className="flex h-[10px] shrink-0 items-center justify-end bg-[#484848] text-white">
            <ChevronsRight size={10} strokeWidth={3} />
          </div>
          <BrowserLabPanel />
          <CssPanel />
          <FilesPanel />
        </aside>
      </div>
      <Taskbar />
      <ContextMenu />
      <Annotations />
      <div className="absolute top-[376px] right-0 h-[44px] w-[6px] rounded-xs border-t-4 border-[#a8501c] bg-[#f09018]" />
      <Watermark />
    </div>
  );
}
